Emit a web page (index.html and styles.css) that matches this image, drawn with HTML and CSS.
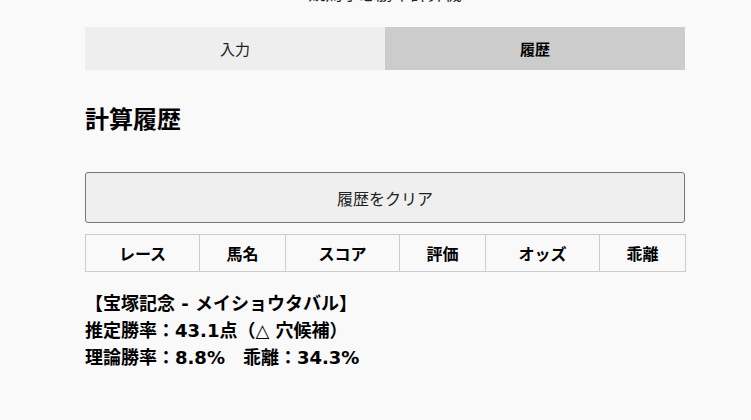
FILE: index.html
```html
<!DOCTYPE html>
<html lang="ja">
<head>
<meta charset="utf-8">
<title>計算履歴</title>
<link rel="stylesheet" href="styles.css">
</head>
<body>
<div class="page">
  <h1 class="title">競馬予想勝率計算機</h1>
  <div class="tabs">
    <div class="tab">入力</div>
    <div class="tab active">履歴</div>
  </div>
  <h2 class="heading">計算履歴</h2>
  <button class="clear-btn" type="button">履歴をクリア</button>
  <table class="history">
    <colgroup>
      <col class="c-wide"><col class="c-narrow"><col class="c-wide"><col class="c-narrow"><col class="c-wide"><col class="c-narrow">
    </colgroup>
    <thead>
      <tr><th>レース</th><th>馬名</th><th>スコア</th><th>評価</th><th>オッズ</th><th>乖離</th></tr>
    </thead>
  </table>
  <div class="entry">
    <div>【宝塚記念 - メイショウタバル】</div>
    <div>推定勝率：43.1点（△ 穴候補）</div>
    <div>理論勝率：8.8%　乖離：34.3%</div>
  </div>
</div>
</body>
</html>
```
FILE: styles.css
```css
html, body {
  margin: 0;
  padding: 0;
  background: #f9f9f9;
  color: #111;
  font-family: "Noto Sans CJK JP", "Noto Sans", sans-serif;
}
.page {
  width: 600px;
  margin-left: 85px;
}
.title {
  margin: -17px 0 24px;
  font-size: 17px;
  line-height: 20px;
  font-weight: normal;
  text-align: center;
  color: #222;
}
.tabs {
  display: flex;
  height: 43px;
}
.tab {
  flex: 1;
  display: flex;
  align-items: center;
  justify-content: center;
  background: #eeeeee;
  font-size: 15px;
  color: #222;
}
.tab.active {
  background: #cccccc;
  font-weight: bold;
  color: #000;
}
.heading {
  margin: 33px 0 40px;
  font-size: 24px;
  line-height: 29px;
  font-weight: bold;
  color: #000;
}
.clear-btn {
  display: block;
  width: 100%;
  height: 51px;
  margin: 0;
  padding: 0;
  background: #efefef;
  border: 1px solid #767676;
  border-radius: 3px;
  font-family: inherit;
  font-size: 16px;
  color: #222;
}
.history {
  width: 100%;
  margin-top: 11px;
  border-collapse: collapse;
  table-layout: fixed;
}
.c-wide { width: 114px; }
.c-narrow { width: 86px; }
.history th {
  height: 36px;
  padding: 0;
  border: 1px solid #cccccc;
  font-size: 16px;
  font-weight: bold;
  text-align: center;
  color: #000;
}
.entry {
  margin-top: 18px;
  font-family: "DejaVu Sans", "Noto Sans CJK JP", sans-serif;
  font-size: 18px;
  line-height: 27px;
  font-weight: bold;
  color: #000;
}
```
